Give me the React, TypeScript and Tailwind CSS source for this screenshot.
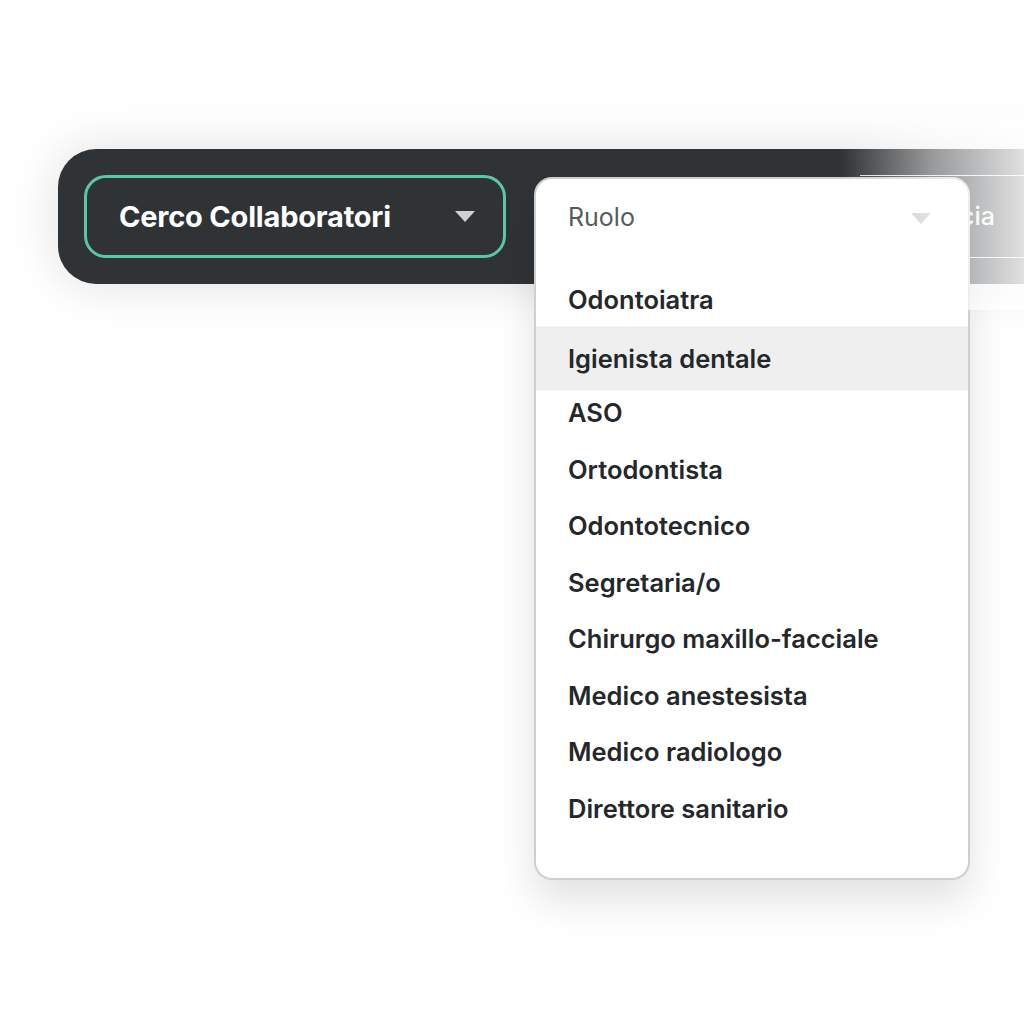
import React from 'react';

const ruoli = [
  'Odontoiatra',
  'Igienista dentale',
  'ASO',
  'Ortodontista',
  'Odontotecnico',
  'Segretaria/o',
  'Chirurgo maxillo-facciale',
  'Medico anestesista',
  'Medico radiologo',
  'Direttore sanitario',
];

const Caret: React.FC<{ className?: string }> = ({ className }) => (
  <svg width="20" height="11" viewBox="0 0 20 11" className={className}>
    <path d="M0 0 H20 L10 11 Z" fill="currentColor" />
  </svg>
);

export default function App() {
  return (
    <div
      className="relative w-[1024px] h-[1024px] overflow-hidden bg-white"
      style={{ fontFamily: 'Inter, "Noto Sans", sans-serif' }}
    >
      <div className="pt-[149px] pl-[58px]">
        {/* barra di ricerca */}
        <div className="flex items-center h-[135px] w-[1100px] pl-[26px] rounded-l-[38px] bg-[#303336] shadow-[0_0_50px_rgba(0,0,0,0.13)]">
          <div className="flex items-center justify-between w-[422px] h-[83px] pl-[32px] pr-[28px] rounded-[22px] border-[3px] border-[#5cc8a3]">
            <span className="text-[29px] font-bold text-white tracking-[-0.2px]">Cerco Collaboratori</span>
            <Caret className="text-[#d0d0d0]" />
          </div>
          <div className="flex items-center justify-end ml-[354px] w-[194px] h-[83px] pr-[59px] border-y border-[#e6e6e6]">
            <span className="text-[25px] font-medium text-[#f2f2f2]">Provincia</span>
          </div>
        </div>
      </div>

      {/* menu a tendina Ruolo */}
      <div className="absolute left-[534px] top-[177px] w-[436px] h-[703px] rounded-[18px] border-2 border-[#cfcfcf] bg-white shadow-[0_20px_40px_rgba(0,0,0,0.12)] overflow-hidden">
        <div className="flex items-center justify-between h-[78px] pl-[32px] pr-[37px]">
          <span className="text-[25px] text-[#555a5a]">Ruolo</span>
          <Caret className="text-[#c4c4c4]" />
        </div>
        <ul className="pt-[15px]">
          {ruoli.map((r) => (
            <li
              key={r}
              className={
                r === 'Igienista dentale'
                  ? 'flex items-center h-[64px] -my-[3.75px] translate-y-[1.5px] pl-[32px] bg-[#efefef] text-[25.5px] font-semibold text-[#25282a]'
                  : 'flex items-center h-[56.5px] pl-[32px] text-[25.5px] font-semibold text-[#25282a]'
              }
            >
              {r}
            </li>
          ))}
        </ul>
      </div>

      {/* dissolvenza a destra */}
      <div className="pointer-events-none absolute left-[840px] top-[120px] w-[184px] h-[190px] bg-gradient-to-r from-white/0 via-white/50 to-white/85" />
    </div>
  );
}
